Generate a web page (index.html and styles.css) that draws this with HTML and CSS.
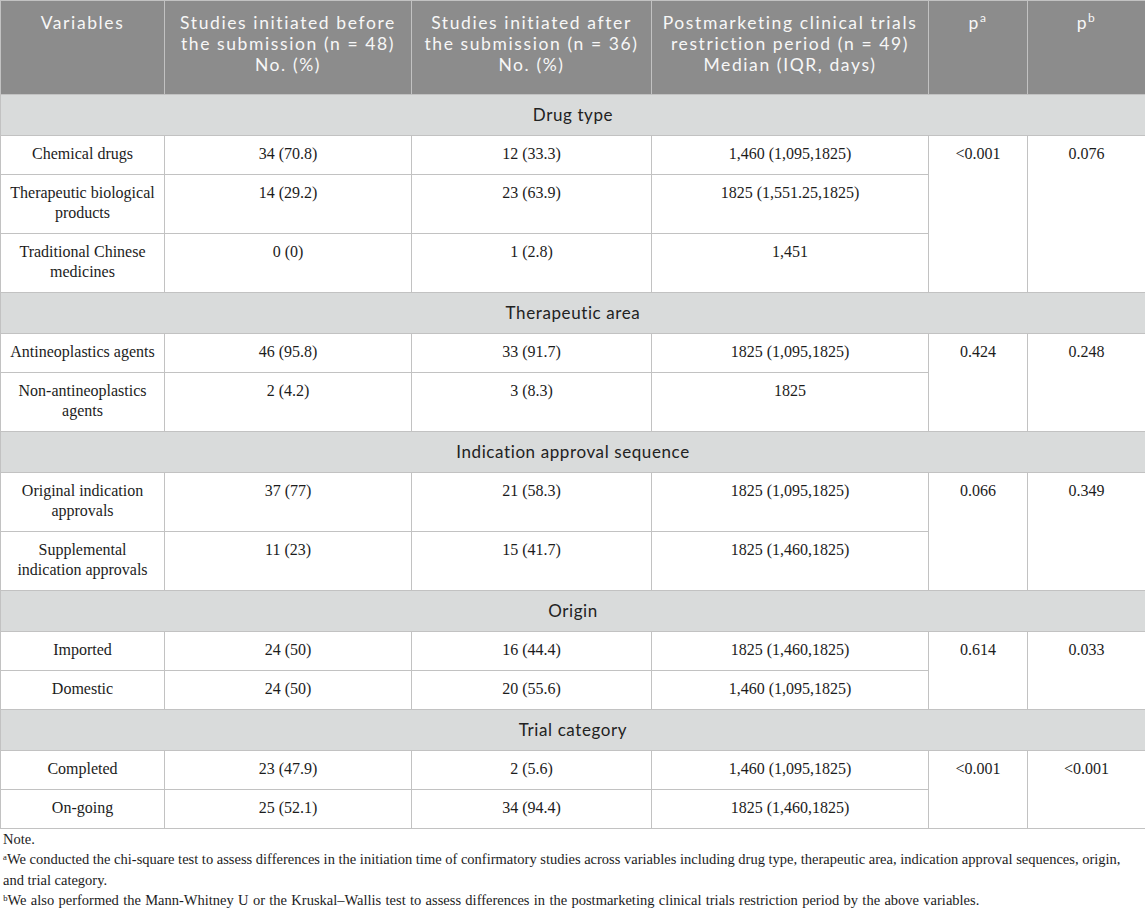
FILE: index.html
```html
<!DOCTYPE html>
<html lang="en">
<head>
    <meta charset="UTF-8">
    <meta name="viewport" content="width=device-width, initial-scale=1.0">
    <title>Confirmatory studies table</title>
    <link rel="stylesheet" href="styles.css">
</head>
<body>
    <table class="data-table">
        <colgroup>
            <col class="c-var">
            <col class="c-before">
            <col class="c-after">
            <col class="c-period">
            <col class="c-pa">
            <col class="c-pb">
        </colgroup>
        <thead>
            <tr>
                <th>Variables</th>
                <th>Studies initiated before<br>the submission (n = 48)<br>No. (%)</th>
                <th>Studies initiated after<br>the submission (n = 36)<br>No. (%)</th>
                <th>Postmarketing clinical trials<br>restriction period (n = 49)<br>Median (IQR, days)</th>
                <th>p<sup>a</sup></th>
                <th>p<sup>b</sup></th>
            </tr>
        </thead>
        <tbody>
            <!-- Drug type -->
            <tr class="group"><td colspan="6">Drug type</td></tr>
            <tr>
                <td>Chemical drugs</td>
                <td>34 (70.8)</td>
                <td>12 (33.3)</td>
                <td>1,460 (1,095,1825)</td>
                <td rowspan="3">&lt;0.001</td>
                <td rowspan="3">0.076</td>
            </tr>
            <tr class="tall">
                <td>Therapeutic biological products</td>
                <td>14 (29.2)</td>
                <td>23 (63.9)</td>
                <td>1825 (1,551.25,1825)</td>
            </tr>
            <tr class="tall">
                <td>Traditional Chinese medicines</td>
                <td>0 (0)</td>
                <td>1 (2.8)</td>
                <td>1,451</td>
            </tr>

            <!-- Therapeutic area -->
            <tr class="group"><td colspan="6">Therapeutic area</td></tr>
            <tr>
                <td>Antineoplastics agents</td>
                <td>46 (95.8)</td>
                <td>33 (91.7)</td>
                <td>1825 (1,095,1825)</td>
                <td rowspan="2">0.424</td>
                <td rowspan="2">0.248</td>
            </tr>
            <tr class="tall">
                <td>Non-antineoplastics agents</td>
                <td>2 (4.2)</td>
                <td>3 (8.3)</td>
                <td>1825</td>
            </tr>

            <!-- Indication approval sequence -->
            <tr class="group"><td colspan="6">Indication approval sequence</td></tr>
            <tr class="tall">
                <td>Original indication approvals</td>
                <td>37 (77)</td>
                <td>21 (58.3)</td>
                <td>1825 (1,095,1825)</td>
                <td rowspan="2">0.066</td>
                <td rowspan="2">0.349</td>
            </tr>
            <tr class="tall">
                <td>Supplemental indication approvals</td>
                <td>11 (23)</td>
                <td>15 (41.7)</td>
                <td>1825 (1,460,1825)</td>
            </tr>

            <!-- Origin -->
            <tr class="group"><td colspan="6">Origin</td></tr>
            <tr>
                <td>Imported</td>
                <td>24 (50)</td>
                <td>16 (44.4)</td>
                <td>1825 (1,460,1825)</td>
                <td rowspan="2">0.614</td>
                <td rowspan="2">0.033</td>
            </tr>
            <tr>
                <td>Domestic</td>
                <td>24 (50)</td>
                <td>20 (55.6)</td>
                <td>1,460 (1,095,1825)</td>
            </tr>

            <!-- Trial category -->
            <tr class="group"><td colspan="6">Trial category</td></tr>
            <tr>
                <td>Completed</td>
                <td>23 (47.9)</td>
                <td>2 (5.6)</td>
                <td>1,460 (1,095,1825)</td>
                <td rowspan="2">&lt;0.001</td>
                <td rowspan="2">&lt;0.001</td>
            </tr>
            <tr>
                <td>On-going</td>
                <td>25 (52.1)</td>
                <td>34 (94.4)</td>
                <td>1825 (1,460,1825)</td>
            </tr>
        </tbody>
    </table>

    <div class="notes">
        <p>Note.</p>
        <p>ᵃWe conducted the chi-square test to assess differences in the initiation time of confirmatory studies across variables including drug type, therapeutic area, indication approval sequences, origin, and trial category.</p>
        <p class="wide">ᵇWe also performed the Mann-Whitney U or the Kruskal–Wallis test to assess differences in the postmarketing clinical trials restriction period by the above variables.</p>
    </div>
</body>
</html>
```

FILE: styles.css
```css
body {
    margin: 0;
    padding: 0;
    background: white;
    color: #1c1c1c;
    font-family: "Liberation Serif", "Times New Roman", serif;
}
.data-table {
    width: 1145px;
    border-collapse: collapse;
    table-layout: fixed;
}
.c-var { width: 164px; }
.c-before { width: 247px; }
.c-after { width: 240px; }
.c-period { width: 277px; }
.c-pa { width: 99px; }
.c-pb { width: 118px; }

.data-table th,
.data-table td {
    border: 1px solid #c2c2c2;
    text-align: center;
    vertical-align: top;
}
.data-table th {
    height: 94px;
    box-sizing: border-box;
    padding: 11px 0 0;
    background: #8c8c8c;
    color: #f7f7f7;
    font-family: Lato, "Open Sans", sans-serif;
    font-size: 17.5px;
    font-weight: normal;
    line-height: 21px;
    letter-spacing: 1.6px;
}
.data-table th sup {
    font-size: 12px;
    line-height: 0;
}
.data-table td {
    height: 39px;
    box-sizing: border-box;
    padding: 8px 6px 0;
    font-size: 16px;
    line-height: 20px;
}
.data-table tr.tall td {
    height: 59px;
}
.data-table tr.group td {
    height: 41px;
    padding: 0;
    vertical-align: middle;
    background: #d9dbdb;
    font-family: Lato, "Open Sans", sans-serif;
    font-size: 17px;
    letter-spacing: 0.6px;
    color: #222;
}

.notes {
    padding: 0 3px;
    font-size: 14.5px;
    line-height: 20.3px;
}
.notes p {
    margin: 0;
}
.notes .wide {
    word-spacing: 0.7px;
}
```
